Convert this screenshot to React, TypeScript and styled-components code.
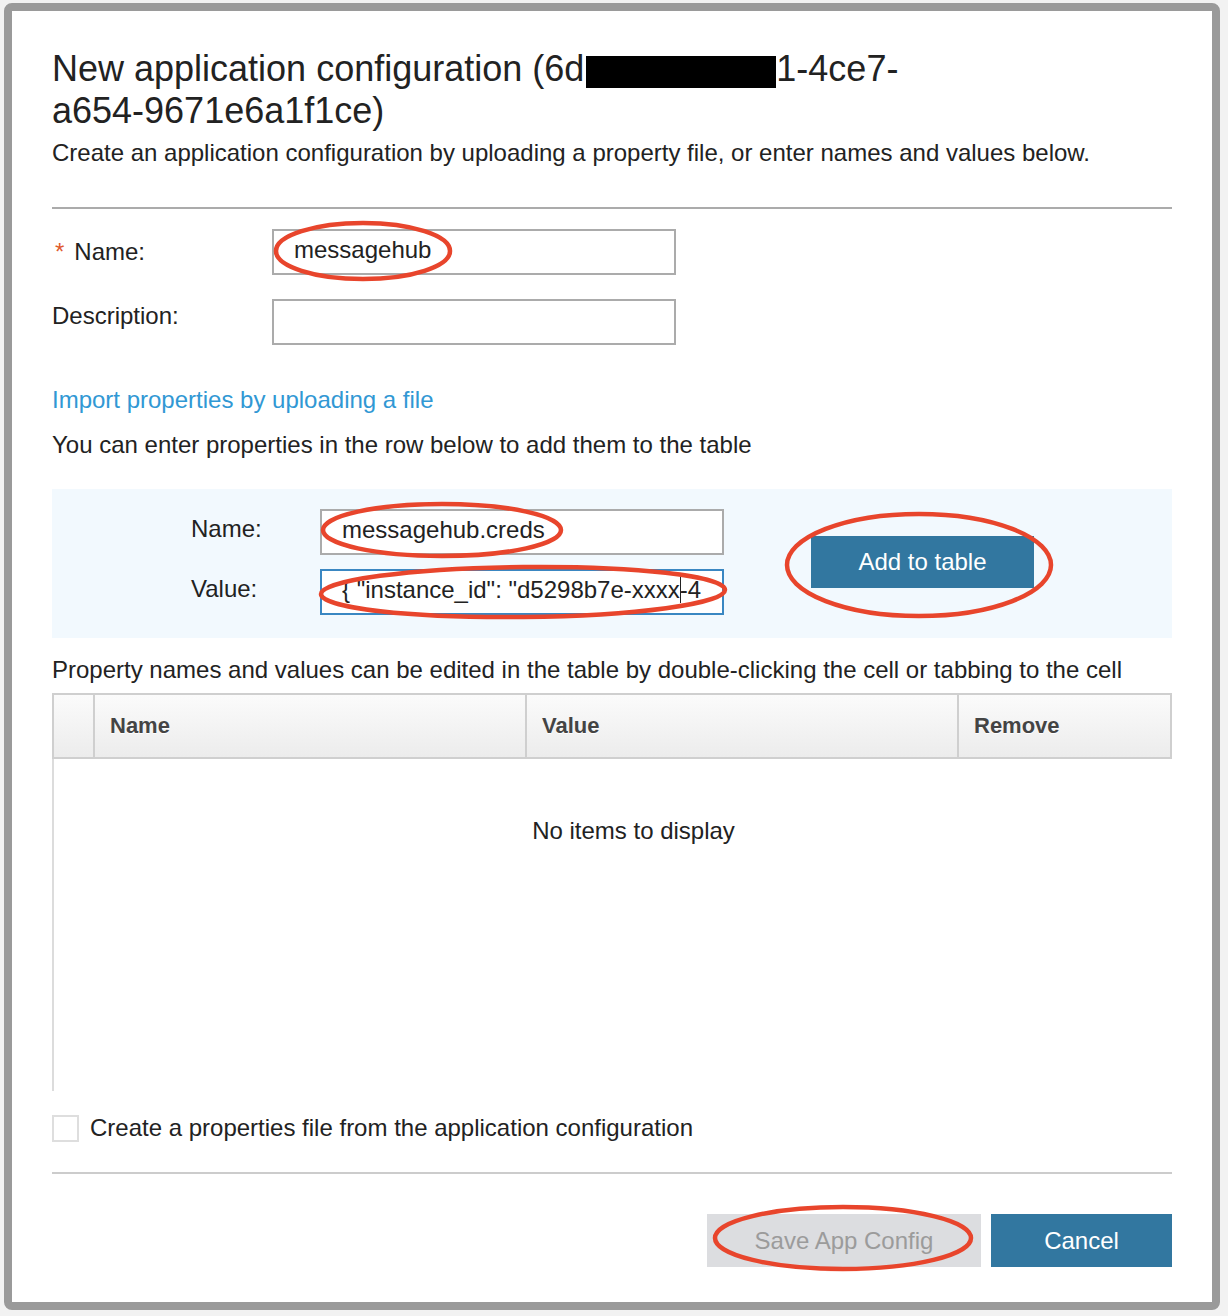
import React from "react";
import styled, { createGlobalStyle } from "styled-components";

const GlobalStyle = createGlobalStyle`
  html, body { margin: 0; padding: 0; background: #f2f2f2; }
  body { font-family: "Liberation Sans", Arial, Helvetica, sans-serif; color: #222; }
`;

const Page = styled.div`
  position: relative;
  width: 1228px;
  height: 1316px;
  overflow: hidden;
  background: #f2f2f2;
  padding: 3px 0 0 4px;
  box-sizing: border-box;
`;

const Dialog = styled.div`
  width: 1216px;
  box-sizing: border-box;
  background: #fff;
  border: 8px solid #9a9a9a;
  border-radius: 8px;
  padding: 37px 40px 35px;
  display: flex;
  flex-direction: column;
`;

const Title = styled.h1`
  margin: 0;
  font-size: 36px;
  line-height: 42px;
  font-weight: 400;
  color: #222;
`;

const Redaction = styled.span`
  display: inline-block;
  width: 190px;
  height: 32px;
  background: #000;
  vertical-align: -7px;
  margin-left: 2px;
`;

const Text = styled.p<{ $mt?: number }>`
  margin: ${(p) => p.$mt ?? 0}px 0 0;
  font-size: 24px;
  line-height: 28px;
  color: #222;
`;

const Link = styled.a`
  display: block;
  margin-top: 41px;
  font-size: 24px;
  line-height: 28px;
  color: #3198d4;
  text-decoration: none;
`;

const Divider = styled.hr<{ $mt: number; $color: string }>`
  margin: ${(p) => p.$mt}px 0 0;
  border: none;
  border-top: 2px solid ${(p) => p.$color};
  height: 0;
`;

const FieldRow = styled.div<{ $mt: number }>`
  display: flex;
  align-items: center;
  margin-top: ${(p) => p.$mt}px;
`;

const FieldLabel = styled.label<{ $width: number; $lift?: number }>`
  width: ${(p) => p.$width}px;
  flex: none;
  font-size: 24px;
  line-height: 28px;
  padding-bottom: ${(p) => (p.$lift ?? 0) * 2}px;
  color: #222;
`;

const Required = styled.span`
  color: #e05a2e;
  margin: 0 10px 0 3px;
`;

const InputBox = styled.div<{ $focused?: boolean }>`
  width: 404px;
  height: 46px;
  box-sizing: border-box;
  border: 2px solid ${(p) => (p.$focused ? "#3a87c2" : "#ababab")};
  background: #fff;
  padding: 0 20px 4px;
  display: flex;
  align-items: center;
  font-size: 24px;
  color: #222;
  white-space: nowrap;
  overflow: hidden;
`;

const InputText = styled.span`
  display: block;
  overflow: hidden;
  white-space: nowrap;
`;

const Caret = styled.span`
  display: inline-block;
  width: 0;
  height: 27px;
  border-left: 1.5px solid #222;
  vertical-align: -5px;
  margin-right: -1px;
`;

const Panel = styled.div`
  margin-top: 30px;
  background: #f2f9fe;
  padding: 20px 0 23px 139px;
  display: flex;
  align-items: center;
`;

const PanelFields = styled.div`
  display: flex;
  flex-direction: column;
  gap: 14px;
`;

const PanelRow = styled.div`
  display: flex;
  align-items: center;
`;

const Button = styled.button<{ $variant: "primary" | "disabled"; $width: number }>`
  width: ${(p) => p.$width}px;
  height: 53px;
  border: none;
  border-radius: 0;
  font-family: "Liberation Sans", Arial, sans-serif;
  font-size: 24px;
  background: ${(p) => (p.$variant === "primary" ? "#3277a0" : "#dcdde0")};
  color: ${(p) => (p.$variant === "primary" ? "#fff" : "#9b9b9b")};
  padding: 0;
  cursor: pointer;
`;

const AddButton = styled(Button)`
  height: 52px;
  margin-left: 87px;
`;

const Table = styled.div`
  margin-top: 9px;
  width: 1120px;
`;

const TableHead = styled.div`
  display: grid;
  grid-template-columns: 39px 432px 432px 1fr;
  height: 66px;
  box-sizing: border-box;
  border: 2px solid #cfcfcf;
  background: linear-gradient(#fbfbfb, #ececec);
`;

const HeadCell = styled.div<{ $first?: boolean }>`
  display: flex;
  align-items: center;
  padding-left: 15px;
  border-left: ${(p) => (p.$first ? "none" : "2px solid #cfcfcf")};
  font-size: 22px;
  font-weight: 700;
  color: #444;
  text-shadow: 0 1px 0 #fff;
`;

const TableBody = styled.div`
  height: 332px;
  box-sizing: border-box;
  border-left: 2px solid #dcdcdc;
  padding: 58px 0 0 41px;
  text-align: center;
  font-size: 24px;
  line-height: 28px;
  color: #222;
`;

const CheckRow = styled.label`
  display: flex;
  align-items: center;
  margin-top: 23px;
  font-size: 24px;
  line-height: 28px;
  color: #222;
  gap: 11px;
`;

const CheckBox = styled.span`
  width: 27px;
  height: 27px;
  box-sizing: border-box;
  border: 2px solid #dedede;
  background: #fff;
`;

const Footer = styled.div`
  display: flex;
  justify-content: flex-end;
  gap: 10px;
  margin-top: 40px;
`;

const Annotations = styled.svg`
  position: absolute;
  left: 0;
  top: 0;
  width: 1228px;
  height: 1316px;
  pointer-events: none;
`;

const marks = [
  { cx: 363, cy: 251, rx: 87, ry: 28, rot: 0 },
  { cx: 442, cy: 530, rx: 119, ry: 26, rot: 0 },
  { cx: 523, cy: 592, rx: 202, ry: 25, rot: -0.6 },
  { cx: 919, cy: 565, rx: 132, ry: 51, rot: 0 },
  { cx: 843, cy: 1238, rx: 128, ry: 31, rot: 0 },
];

export default function App() {
  return (
    <>
      <GlobalStyle />
      <Page>
        <Dialog>
          <Title>
            New application configuration (6d<Redaction />1-4ce7-
            <br />
            a654-9671e6a1f1ce)
          </Title>
          <Text $mt={7}>
            Create an application configuration by uploading a property file, or enter names and values below.
          </Text>
          <Divider $mt={40} $color="#ababab" />

          <FieldRow $mt={20}>
            <FieldLabel $width={220}>
              <Required>*</Required>Name:
            </FieldLabel>
            <InputBox>messagehub</InputBox>
          </FieldRow>
          <FieldRow $mt={24}>
            <FieldLabel $width={220} $lift={6}>
              Description:
            </FieldLabel>
            <InputBox />
          </FieldRow>

          <Link href="#">Import properties by uploading a file</Link>
          <Text $mt={17}>You can enter properties in the row below to add them to the table</Text>

          <Panel>
            <PanelFields>
              <PanelRow>
                <FieldLabel $width={129} $lift={3}>
                  Name:
                </FieldLabel>
                <InputBox>messagehub.creds</InputBox>
              </PanelRow>
              <PanelRow>
                <FieldLabel $width={129} $lift={3}>
                  Value:
                </FieldLabel>
                <InputBox $focused>
                  <InputText>
                    {'{ "instance_id": "d5298b7e-xxxx'}
                    <Caret />
                    {"-4"}
                  </InputText>
                </InputBox>
              </PanelRow>
            </PanelFields>
            <AddButton $variant="primary" $width={223}>
              Add to table
            </AddButton>
          </Panel>

          <Text $mt={18}>
            Property names and values can be edited in the table by double-clicking the cell or tabbing to the cell
          </Text>

          <Table>
            <TableHead>
              <HeadCell $first />
              <HeadCell>Name</HeadCell>
              <HeadCell>Value</HeadCell>
              <HeadCell>Remove</HeadCell>
            </TableHead>
            <TableBody>No items to display</TableBody>
          </Table>

          <CheckRow>
            <CheckBox />
            Create a properties file from the application configuration
          </CheckRow>

          <Divider $mt={30} $color="#cccccc" />

          <Footer>
            <Button $variant="disabled" $width={274} disabled>
              Save App Config
            </Button>
            <Button $variant="primary" $width={181}>
              Cancel
            </Button>
          </Footer>
        </Dialog>

        <Annotations viewBox="0 0 1228 1316">
          {marks.map((m, i) => (
            <ellipse
              key={i}
              cx={m.cx}
              cy={m.cy}
              rx={m.rx}
              ry={m.ry}
              transform={`rotate(${m.rot} ${m.cx} ${m.cy})`}
              fill="none"
              stroke="#e8452c"
              strokeWidth={4.5}
            />
          ))}
        </Annotations>
      </Page>
    </>
  );
}
